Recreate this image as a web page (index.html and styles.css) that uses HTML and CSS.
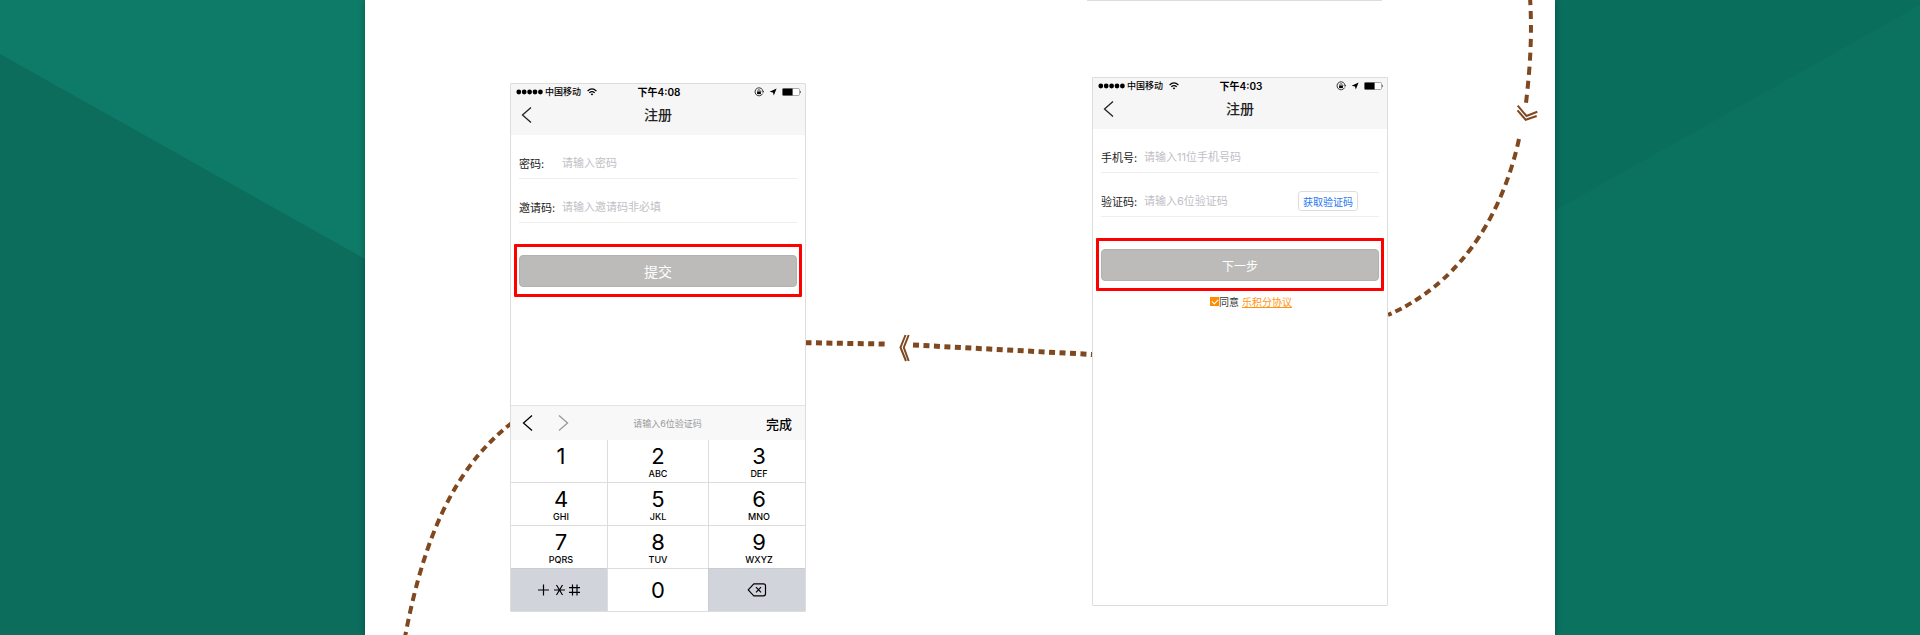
FILE: index.html
```html
<!DOCTYPE html>
<html lang="zh-CN">
<head>
<meta charset="utf-8">
<title>注册</title>
<link rel="stylesheet" href="styles.css">
</head>
<body>
<svg class="symbols" aria-hidden="true">
  <symbol id="signal" viewBox="0 0 28 6"><g fill="#000"><circle cx="2.8" cy="3" r="2.4"/><circle cx="8.2" cy="3" r="2.4"/><circle cx="13.6" cy="3" r="2.4"/><circle cx="19" cy="3" r="2.4"/><circle cx="24.4" cy="3" r="2.4"/></g></symbol>
  <symbol id="wifi" viewBox="0 0 10 8"><g fill="none" stroke="#000" stroke-width="1.2"><path d="M.6 3Q5-1.2 9.4 3"/><path d="M2.3 4.8Q5 2.4 7.7 4.8"/></g><path d="M3.6 5.9Q5 4.9 6.4 5.9L5 7.4Z"/></symbol>
  <symbol id="lock" viewBox="0 0 10 10"><path d="M8.6 6.6A4 4 0 1 1 9 4.4M7.8 4.2L9 5.4L10 4" fill="none" stroke="#222" stroke-width=".9"/><path d="M3.9 4.6V3.7a1.1 1.1 0 0 1 2.2 0v.9" fill="none" stroke="#222" stroke-width=".7"/><path d="M3.1 4.5h3.8v2.6H3.1z"/></symbol>
  <symbol id="arrow" viewBox="0 0 8 8"><path d="M7.6.6L4.8 7.5L4 4.4L.6 3.8Z"/></symbol>
  <symbol id="battery" viewBox="0 0 20 8"><rect x=".5" y=".5" width="17" height="7" rx="1.2" fill="#fff" stroke="#888" stroke-width=".7"/><path d="M.6 .6h10v6.8H.6z"/><path d="M18.400 2.600q1.400 1.400 0 2.800z"/></symbol>
  <symbol id="back" viewBox="0 0 12 18"><path d="M10 1.5L1.5 9L10 16.5" fill="none" stroke="currentColor" stroke-width="1.3"/></symbol>
  <symbol id="erase" viewBox="0 0 20 16"><path d="M6.8 1.8H16.5a2 2 0 0 1 2 2v8a2 2 0 0 1-2 2H6.8L1.2 7.8Z" fill="none" stroke="#000" stroke-width="1.2" stroke-linejoin="round"/><path d="M9 5.2l5 5.2M14 5.2l-5 5.2" stroke="#000" stroke-width="1.2"/></symbol>
  <symbol id="marks" viewBox="0 0 44 14"><path d="M1 7h11M6.500 1.500v11M17 7h11M19.500 2l6 10M25.500 2l-6 10M32 4.700h11M32 9.300h11M35.500 1.500v11M40 1.500v11" fill="none" stroke="#000" stroke-width="1.200"/></symbol>
</svg>
<svg class="backdrop" viewBox="0 0 1920 635" preserveAspectRatio="none" aria-hidden="true">
  <path d="M0 0H960V635H0Z" fill="#0c6d5d"/>
  <path d="M0 0H960V592L0 54Z" fill="#0e7b68"/>
  <path d="M960 0H1920V635H960Z" fill="#0a6e5d"/>
  <path d="M1920 5L960 544V635H1920Z" fill="#0c7260"/>
</svg>

<main class="panel">
  <svg class="trail" viewBox="0 0 1190 635" preserveAspectRatio="xMidYMin meet" aria-hidden="true">
    <path class="edge" d="M722 0.500H1017"/>
    <path class="dash" stroke-dasharray="8 6" d="M1165 -3C1167 30 1166 60 1161 103"/>
    <path class="dash" stroke-dasharray="8 5.300 8 5.300 8 5.300 8 5.300 8 5.200 8 5 8 5 8 5 8 4.800 8 4.600 7 5 7 5 7 5 7 4.800 7 4.600 7 4.400 7 4.200 7 4.200 7 4.200" d="M1154 139C1138 212 1098 282 1023 315"/>
    <path class="dash wide" stroke-dasharray="6 4.450" d="M440.500 342.700L520 344"/>
    <path class="dash wide" stroke-dasharray="6 4.480" d="M548 345L728 354.500"/>
    <path class="dash" stroke-dasharray="6 4.500 7 4.500 7 4.700 7 4.800 7 5 7.500 5 7.500 5 7.500 5 7.500 5 8 5 8 5 8 5 8 5 8 5 8 5.200 8 5.200 8 5.200 8 5.200 8 5.200" d="M146 423.500C92 466 60 531 40 637"/>
    <path class="chevron" d="M1152.700 105.700L1161.500 116L1172.300 111.800M1152.500 110.300L1160.700 119.800L1171.700 116"/>
    <path class="chevron" d="M540.500 335L535.500 347.500L541 361M543.700 335L538.800 347.500L543.700 361"/>
  </svg>

  <section class="phone first" aria-label="设置密码">
    <header class="head">
      <div class="status">
        <span class="carrier"><svg class="i-signal"><use href="#signal"/></svg>中国移动<svg class="i-wifi"><use href="#wifi"/></svg></span>
        <time>下午4:08</time>
        <span class="tray"><svg class="i-lock"><use href="#lock"/></svg><svg class="i-arrow"><use href="#arrow"/></svg><svg class="i-battery"><use href="#battery"/></svg></span>
      </div>
      <div class="nav"><button class="back" aria-label="返回"><svg class="i-back"><use href="#back"/></svg></button><h1>注册</h1></div>
    </header>
    <form class="form">
      <div class="field"><label for="pwd">密码:</label><input id="pwd" type="password" placeholder="请输入密码"></div>
      <div class="field"><label for="invite">邀请码:</label><input id="invite" type="text" placeholder="请输入邀请码非必填"></div>
      <div class="mark"><button class="submit" type="button">提交</button></div>
    </form>
    <div class="keyboard">
      <div class="tools">
        <button aria-label="上一项"><svg class="i-back"><use href="#back"/></svg></button>
        <button class="next" aria-label="下一项"><svg class="i-back"><use href="#back"/></svg></button>
        <span>请输入6位验证码</span>
        <button class="done">完成</button>
      </div>
      <div class="keys">
        <button>1</button>
        <button>2<small>ABC</small></button>
        <button>3<small>DEF</small></button>
        <button>4<small>GHI</small></button>
        <button>5<small>JKL</small></button>
        <button>6<small>MNO</small></button>
        <button>7<small>PQRS</small></button>
        <button>8<small>TUV</small></button>
        <button>9<small>WXYZ</small></button>
        <button class="alt" aria-label="符号"><svg class="i-marks"><use href="#marks"/></svg></button>
        <button class="zero">0</button>
        <button class="alt" aria-label="删除"><svg class="i-erase"><use href="#erase"/></svg></button>
      </div>
    </div>
  </section>

  <section class="phone second" aria-label="手机验证">
    <header class="head">
      <div class="status">
        <span class="carrier"><svg class="i-signal"><use href="#signal"/></svg>中国移动<svg class="i-wifi"><use href="#wifi"/></svg></span>
        <time>下午4:03</time>
        <span class="tray"><svg class="i-lock"><use href="#lock"/></svg><svg class="i-arrow"><use href="#arrow"/></svg><svg class="i-battery"><use href="#battery"/></svg></span>
      </div>
      <div class="nav"><button class="back" aria-label="返回"><svg class="i-back"><use href="#back"/></svg></button><h1>注册</h1></div>
    </header>
    <form class="form">
      <div class="field"><label for="tel">手机号:</label><input id="tel" type="tel" placeholder="请输入11位手机号码"></div>
      <div class="field"><label for="code">验证码:</label><input id="code" type="text" placeholder="请输入6位验证码"><button class="get" type="button">获取验证码</button></div>
      <div class="mark"><button class="submit small" type="button">下一步</button></div>
      <div class="agree"><input id="agree" type="checkbox" checked><label for="agree">同意</label><a href="#">乐积分协议</a></div>
    </form>
  </section>
</main>
</body>
</html>
```
FILE: styles.css
```css
* { box-sizing: border-box; }

body {
  margin: 0;
  min-height: 100vh;
  position: relative;
  overflow: hidden;
  background: #0c6d5d;
  font-family: Inter, "Noto Sans CJK SC", sans-serif;
  color: #333;
}

button {
  padding: 0;
  border: 0;
  background: none;
  font: inherit;
  color: inherit;
}

svg { display: block; flex: none; }
.symbols { position: absolute; width: 0; height: 0; }
.backdrop { position: absolute; inset: 0; width: 100%; height: 100%; }

.panel {
  position: relative;
  max-width: 1190px;
  min-height: 100vh;
  margin: 0 auto;
  padding: 77px 0 24px;
  display: grid;
  grid-template-columns: 145fr 296px 286fr 296px 167fr;
  align-items: start;
  background: #fff;
  box-shadow: 0 0 6px rgba(0, 0, 0, .3);
}

.trail { position: absolute; top: 0; left: 0; width: 100%; }
.dash { fill: none; stroke: #80481e; stroke-width: 4; }
.dash.wide { stroke-width: 5; }
.chevron { fill: none; stroke: #80481e; stroke-width: 2; }
.edge { stroke: #ddd; }

/* Phone frame */
.phone {
  position: relative;
  min-height: 529px;
  display: flex;
  flex-direction: column;
  background: #fff;
  border: 1px solid #ddd;
  border-radius: 1px;
}
.first { grid-column: 2; margin-top: 6px; }
.second { grid-column: 4; }

.head { background: #f6f6f6; padding-bottom: 5px; color: #000; }
.status {
  display: grid;
  grid-template-columns: 1fr auto 1fr;
  align-items: center;
  height: 16px;
  padding: 0 3px 0 5px;
  font-size: 9px;
  font-weight: 500;
  line-height: 16px;
}
.status time { font-size: 10px; font-weight: 600; }
.carrier { display: flex; align-items: center; gap: 1px; }
.tray { display: flex; align-items: center; justify-content: flex-end; gap: 5px; }
.i-signal { width: 28px; height: 6px; }
.i-wifi { width: 10px; height: 8px; margin-left: 5px; }
.i-lock { width: 10px; height: 10px; }
.i-arrow { width: 8px; height: 8px; }
.i-battery { width: 20px; height: 8px; }
.i-back { width: 12px; height: 18px; }

.nav {
  display: grid;
  grid-template-columns: 1fr auto 1fr;
  align-items: center;
  height: 30px;
  padding: 0 10px;
  color: #222;
}
.back { justify-self: start; }
.nav h1 { margin: 0; font-size: 14px; font-weight: 500; line-height: 20px; }

/* Form */
.form { font-size: 11px; }
.field {
  display: flex;
  align-items: center;
  height: 44px;
  margin: 0 8px;
  padding-top: 13px;
  border-bottom: 1px solid #eee;
}
.field label { width: 43px; color: #222; }
.field input {
  flex: 1;
  min-width: 0;
  padding: 0;
  border: 0;
  outline: 0;
  background: none;
  font: inherit;
}
.field input::placeholder { color: #c0c0c6; opacity: 1; }
.get {
  height: 20px;
  margin-right: 21px;
  padding: 0 4px;
  border: 1px solid #ddd;
  border-radius: 3px;
  font-size: 10px;
  color: #2878f0;
}
.mark {
  margin: 21px 3px 0;
  padding: 8px 2px 7px;
  border: 3px solid #f00;
  border-radius: 1px;
}
.submit {
  display: block;
  width: 100%;
  height: 32px;
  border: 1px solid #b2b2b0;
  border-radius: 4px;
  background: #bcbbb9;
  font-size: 14px;
  color: #fff;
}
.submit.small { font-size: 12px; }

.agree {
  display: flex;
  align-items: center;
  justify-content: center;
  height: 20px;
  padding-left: 22px;
  font-size: 10px;
}
.agree input {
  appearance: none;
  width: 9px;
  height: 9px;
  margin: 0;
  display: grid;
  place-items: center;
  background: #ff8c00;
}
.agree input:checked::after {
  content: "";
  width: 5px;
  height: 3px;
  border: solid #fff;
  border-width: 0 0 1px 1px;
  transform: rotate(-45deg);
}
.agree a { margin-left: 3px; color: #ff9410; }

/* Keyboard */
.keyboard { margin-top: auto; border-top: 1px solid #e4e4e4; color: #000; }
.tools {
  display: flex;
  align-items: center;
  height: 34px;
  padding: 0 13px 0 11px;
  background: #f8f8f8;
}
.tools span { margin: 0 auto; font-size: 9px; color: #999; }
.tools .next { margin-left: 23px; transform: scaleX(-1); color: #999; }
.tools .done { font-size: 13px; font-weight: 500; }
.keys {
  display: grid;
  grid-template-columns: 96fr 101fr 97fr;
  grid-template-rows: 42px 43px 43px 43px;
}
.keys button {
  display: flex;
  flex-direction: column;
  align-items: center;
  padding-top: 4px;
  padding-left: 4px;
  border-left: 1px solid #ddd;
  border-top: 1px solid #ddd;
  font-size: 22px;
  line-height: 25px;
}
.keys button:nth-child(3n + 1) { border-left: 0; }
.keys button:nth-child(3n + 2) { padding-left: 0; }
.keys button:nth-child(-n + 3) { border-top: 0; }
.keys small { font-size: 9px; font-weight: 500; line-height: 9px; }
.keys button.alt { justify-content: center; padding: 0; background: #d1d4db; border-color: #c8cbd1; }
.keys button.zero { justify-content: center; padding-top: 0; }
.i-marks { width: 44px; height: 14px; }
.i-erase { width: 20px; height: 16px; }
```
